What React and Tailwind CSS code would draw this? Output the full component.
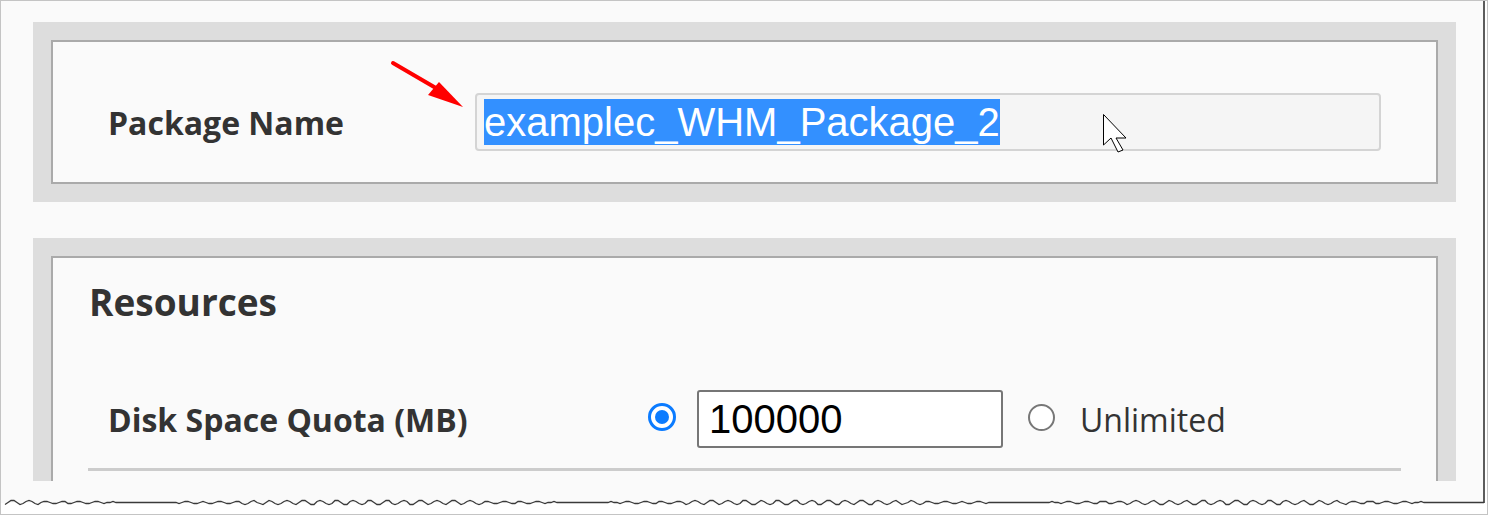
export default function App() {
  // torn paper edge along the bottom of the screenshot
  const torn = [];
  for (let x = 4; x <= 1484; x += 3) {
    const y = 3.5 + Math.round(Math.sin(x * 0.37) * 1.3 + Math.sin(x * 1.71) * 1.1);
    torn.push(`${x},${y}`);
  }

  return (
    <div className="relative w-[1488px] h-[515px] overflow-hidden bg-white border border-[#c4c4c4] font-['Open_Sans',sans-serif] text-[#333333]">
      <div className="w-[1484px] h-[502px] overflow-hidden bg-[#fafafa] border-r-2 border-[#5c5c5c] pt-[21px] pl-[32px]">
        {/* Package name panel */}
        <div className="w-[1423px] bg-[#dddddd] p-[18px]">
          <div className="h-[144px] border-2 border-[#aaaaaa] bg-[#fafafa] pt-[51px] pl-[55px]">
            <div className="flex items-center h-[58px]">
              <div className="w-[367px] mt-[2px] text-[32px] leading-none font-bold">Package Name</div>
              <div className="w-[906px] h-[58px] flex items-center rounded-[4px] border-2 border-[#d4d4d4] bg-[#f5f5f5] pl-[7px]">
                <span className="bg-[#3390ff] text-white text-[40px] leading-[46px] font-['Liberation_Sans',Arial,sans-serif]">
                  examplec_WHM_Package_2
                </span>
              </div>
            </div>
          </div>
        </div>

        {/* Resources panel */}
        <div className="mt-[36px] w-[1423px] h-[243px] overflow-hidden bg-[#dddddd] pt-[18px] px-[18px]">
          <div className="h-[260px] border-2 border-[#aaaaaa] bg-[#fafafa] pt-[25px]">
            <div className="pl-[36px] text-[37px] leading-none font-bold">Resources</div>
            <div className="mt-[70px] mx-[35px] pb-[20px] border-b-[3px] border-[#cccccc]">
              <div className="flex items-center h-[58px] pl-[20px]">
                <div className="w-[540px] mt-[2px] text-[32px] leading-none font-bold">Disk Space Quota (MB)</div>
                <div className="w-[28px] h-[28px] -mt-[4px] rounded-full border-[3px] border-[#0b7bff] bg-white flex items-center justify-center">
                  <div className="w-[14px] h-[14px] rounded-full bg-[#0b7bff]"></div>
                </div>
                <div className="ml-[21px] w-[306px] h-[58px] flex items-center rounded-[3px] border-2 border-[#767676] bg-white pl-[10px] text-[40px] text-black font-['Liberation_Sans',Arial,sans-serif]">
                  100000
                </div>
                <div className="ml-[25px] -mt-[4px] w-[27px] h-[27px] rounded-full border-2 border-[#777777] bg-white"></div>
                <div className="ml-[25px] mt-[2px] text-[32px] leading-none">Unlimited</div>
              </div>
            </div>
          </div>
        </div>
      </div>

      {/* torn edge */}
      <svg className="absolute left-0 top-[498px]" width="1488" height="9">
        <polyline points={torn.join(" ")} fill="none" stroke="#3a3a3a" strokeWidth="1.3" />
      </svg>

      {/* red annotation arrow */}
      <svg className="absolute left-0 top-0 pointer-events-none" width="1488" height="200">
        <line x1="392" y1="62" x2="440" y2="90" stroke="#ff0000" strokeWidth="4" strokeLinecap="round" />
        <polygon points="462,106 427,94 438,81" fill="#ff0000" />
      </svg>

      {/* mouse pointer */}
      <svg className="absolute left-[1102px] top-[113px]" width="26" height="40" viewBox="0 0 26 40">
        <polygon
          points="0.5,0.5 0.5,31 8,24 15,38 20,36 13,24 23,24"
          fill="#ffffff"
          stroke="#000000"
          strokeWidth="1"
        />
      </svg>
    </div>
  );
}
